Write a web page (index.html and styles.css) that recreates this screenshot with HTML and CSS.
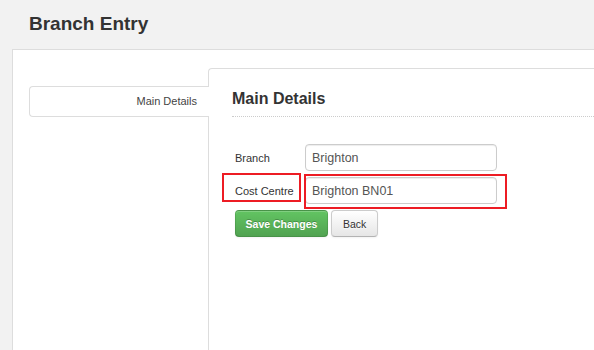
FILE: index.html
```html
<!DOCTYPE html>
<html lang="en">
<head>
    <meta charset="UTF-8">
    <meta name="viewport" content="width=device-width, initial-scale=1.0">
    <title>Branch Entry</title>
    <link rel="stylesheet" href="styles.css">
</head>
<body>
<header class="page-head">
    <h1>Branch Entry</h1>
</header>
<div class="panel">
    <div class="tabbable">
        <ul class="nav-tabs">
            <li class="active"><a href="#main">Main Details</a></li>
        </ul>
        <div class="tab-content" id="main">
            <h2>Main Details</h2>
            <form class="branch-form">
                <div class="control-group">
                    <label for="branch">Branch</label>
                    <input type="text" id="branch" name="branch" value="Brighton">
                </div>
                <div class="control-group">
                    <label for="cost_centre">Cost Centre</label>
                    <input type="text" id="cost_centre" name="cost_centre" value="Brighton BN01">
                    <span class="mark mark-label"></span>
                    <span class="mark mark-field"></span>
                </div>
                <div class="form-actions">
                    <button type="submit" class="btn btn-success">Save Changes</button>
                    <button type="button" class="btn">Back</button>
                </div>
            </form>
        </div>
    </div>
</div>
</body>
</html>
```

FILE: styles.css
```css
:root {
    --border: #dddddd;
    --text: #333333;
    --mark: #ed1c24;
}
body {
    margin: 0;
    min-height: 350px;
    background: #f2f2f2;
    font-family: 'Liberation Sans', Arial, sans-serif;
    color: var(--text);
    overflow: hidden;
}
.page-head {
    padding: 13px 0 0 29px;
}
h1 {
    margin: 0;
    font-size: 19px;
    line-height: 22px;
    font-weight: bold;
    color: #333;
}
.panel {
    margin: 14px 0 0 12px;
    min-height: 301px;
    background: #fff;
    border-top: 1px solid var(--border);
    border-left: 1px solid var(--border);
    padding: 18px 0 0 16px;
    box-sizing: border-box;
}
.tabbable {
    display: flex;
    min-height: 282px;
}
.nav-tabs {
    list-style: none;
    margin: 18px 0 0 0;
    padding: 0;
    width: 180px;
    margin-right: -1px;
    position: relative;
    z-index: 1;
}
.nav-tabs li a {
    display: block;
    height: 29px;
    line-height: 29px;
    text-align: right;
    padding-right: 12px;
    font-size: 11px;
    color: #444;
    text-decoration: none;
    background: #fff;
    border: 1px solid var(--border);
    border-right: none;
    border-radius: 4px 0 0 4px;
}
.tab-content {
    flex: 1;
    border-top: 1px solid var(--border);
    border-left: 1px solid var(--border);
    border-top-left-radius: 4px;
    padding: 20px 0 0 23px;
}
h2 {
    margin: 0;
    font-size: 16px;
    line-height: 20px;
    font-weight: bold;
    color: #333;
    padding-bottom: 7px;
    border-bottom: 1px dotted #cccccc;
}
.branch-form {
    margin-top: 27px;
    padding-left: 3px;
}
.control-group {
    position: relative;
    display: flex;
    align-items: center;
    margin-bottom: 6px;
}
.control-group label {
    width: 70px;
    font-size: 11px;
    color: #333;
}
.control-group input {
    width: 192px;
    height: 27px;
    box-sizing: border-box;
    padding: 0 6px;
    border: 1px solid #cccccc;
    border-radius: 4px;
    font-family: inherit;
    font-size: 12.5px;
    color: #555;
    box-shadow: inset 0 1px 1px rgba(0,0,0,0.075);
    outline: none;
}
.mark {
    position: absolute;
    border: 2px solid var(--mark);
    box-sizing: border-box;
    pointer-events: none;
}
.mark-label {
    left: -13px;
    top: -4px;
    width: 79px;
    height: 29px;
}
.mark-field {
    left: 69px;
    top: -3px;
    width: 203px;
    height: 35px;
}
.form-actions {
    display: flex;
    gap: 3px;
}
.btn {
    height: 27px;
    padding: 0 11px;
    font-family: inherit;
    font-size: 10.5px;
    color: #333;
    border: 1px solid #cccccc;
    border-bottom-color: #b3b3b3;
    border-radius: 4px;
    background: linear-gradient(to bottom, #ffffff, #e6e6e6);
    text-shadow: 0 1px 1px rgba(255,255,255,0.75);
    box-shadow: inset 0 1px 0 rgba(255,255,255,0.2), 0 1px 2px rgba(0,0,0,0.05);
    cursor: pointer;
}
.btn-success {
    width: 93px;
    padding: 0;
    font-weight: bold;
    color: #fff;
    background: linear-gradient(to bottom, #62c462, #51a351);
    border-color: rgba(0,0,0,0.1) rgba(0,0,0,0.1) rgba(0,0,0,0.25);
    text-shadow: 0 -1px 0 rgba(0,0,0,0.25);
}
```
